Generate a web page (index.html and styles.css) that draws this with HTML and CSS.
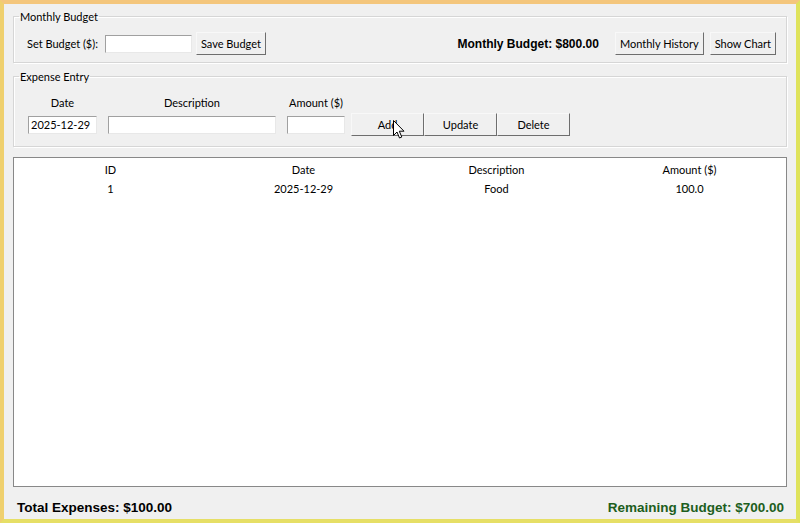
FILE: index.html
```html
<!DOCTYPE html>
<html lang="en">
<head>
  <meta charset="UTF-8" />
  <title>Expense Tracker</title>
  <link rel="stylesheet" href="styles.css">
</head>
<body>
  <div class="window">
    <fieldset class="group">
      <legend>Monthly Budget</legend>
      <div class="budget-row">
        <label for="budget">Set Budget ($):</label>
        <input type="text" id="budget" class="entry budget-entry" />
        <button class="btn">Save Budget</button>
        <span class="budget-label">Monthly Budget: $800.00</span>
        <button class="btn">Monthly History</button>
        <button class="btn">Show Chart</button>
      </div>
    </fieldset>

    <fieldset class="group">
      <legend>Expense Entry</legend>
      <div class="entry-grid">
        <span class="col-label">Date</span>
        <span class="col-label">Description</span>
        <span class="col-label">Amount ($)</span>
        <span></span>
        <input type="text" class="entry date-entry" value="2025-12-29" />
        <input type="text" class="entry desc-entry" />
        <input type="text" class="entry amount-entry" />
        <div class="actions">
          <button class="btn action hover">Add
            <svg class="cursor" width="12" height="19" viewBox="0 0 12 19">
              <path d="M0.5 0.5 L0.5 15.5 L4 12 L6.5 18 L8.8 17 L6.3 11.2 L11 11.2 Z" fill="#fff" stroke="#000" stroke-width="1"/>
            </svg>
          </button>
          <button class="btn action">Update</button>
          <button class="btn action">Delete</button>
        </div>
      </div>
    </fieldset>

    <div class="tree">
      <table>
        <thead>
          <tr><th>ID</th><th>Date</th><th>Description</th><th>Amount ($)</th></tr>
        </thead>
        <tbody>
          <tr><td>1</td><td>2025-12-29</td><td>Food</td><td>100.0</td></tr>
        </tbody>
      </table>
    </div>

    <div class="footer">
      <span class="total">Total Expenses: $100.00</span>
      <span class="remaining">Remaining Budget: $700.00</span>
    </div>
  </div>
</body>
</html>
```

FILE: styles.css
```css
html, body {
  margin: 0;
  padding: 0;
}
body {
  font-family: Lato, 'Liberation Sans', sans-serif;
  font-size: 11px;
  color: #000;
}
.window {
  box-sizing: border-box;
  width: 800px;
  height: 523px;
  display: flex;
  flex-direction: column;
  padding: 5px 9px 0 9px;
  background: #f0f0f0;
  border-style: solid;
  border-width: 4px;
  border-color: #f4c67c #dfe35c #e6df66 #efd06e;
}
.group {
  margin: 0;
  padding: 0;
  border: 1px solid #d6d6d6;
  box-shadow: inset 1px 1px 0 #fff, 1px 1px 0 #fff;
}
.group + .group {
  margin-top: 6px;
}
.group legend {
  padding: 0 1px;
  margin-left: 5px;
  line-height: 15px;
}
.budget-row {
  display: flex;
  align-items: center;
  padding: 8px 10px 7px 13px;
  white-space: nowrap;
}
.budget-row label {
  margin-right: 7px;
}
.entry {
  box-sizing: border-box;
  height: 18px;
  padding: 0 2px;
  font: inherit;
  background: #fff;
  border: 1px solid;
  border-color: #a0a0a0 #e8e8e8 #e8e8e8 #a0a0a0;
  outline: none;
}
.budget-entry {
  width: 87px;
  margin-right: 4px;
}
.btn {
  box-sizing: border-box;
  height: 23px;
  padding: 0 4px;
  font: inherit;
  color: #000;
  background: #f0f0f0;
  border: 1px solid;
  border-color: #f8f8f8 #6e6e6e #6e6e6e #f8f8f8;
}
.budget-label {
  margin-left: auto;
  margin-right: 16px;
  font-family: 'Liberation Sans', Arial, sans-serif;
  font-weight: bold;
  font-size: 12px;
}
.budget-row .btn + .btn {
  margin-left: 6px;
}
.entry-grid {
  display: grid;
  grid-template-columns: 69px 168px 58px auto;
  column-gap: 11px;
  align-items: center;
  padding: 11px 0 10px 14px;
  white-space: nowrap;
}
.col-label {
  text-align: center;
  line-height: 16px;
  margin-bottom: 2px;
}
.entry-grid .entry {
  width: 100%;
}
.actions {
  display: flex;
  margin-left: -5px;
}
.action {
  position: relative;
  width: 73px;
}
.cursor {
  position: absolute;
  left: 41px;
  top: 6px;
}
.tree {
  flex: 1;
  margin-top: 10px;
  background: #fff;
  border: 1px solid #888;
}
.tree table {
  width: 100%;
  border-collapse: collapse;
  table-layout: fixed;
}
.tree th, .tree td {
  font-weight: normal;
  text-align: center;
  padding: 0;
}
.tree th {
  height: 20px;
  padding-top: 1px;
}
.tree td {
  height: 18px;
}
.footer {
  display: flex;
  justify-content: space-between;
  align-items: flex-end;
  height: 32px;
  flex: none;
  box-sizing: border-box;
  padding: 0 3px 3px 4px;
  line-height: 16px;
  font-family: 'Liberation Sans', Arial, sans-serif;
  font-weight: bold;
  font-size: 13.5px;
}
.remaining {
  color: #1d5e1d;
}
```
